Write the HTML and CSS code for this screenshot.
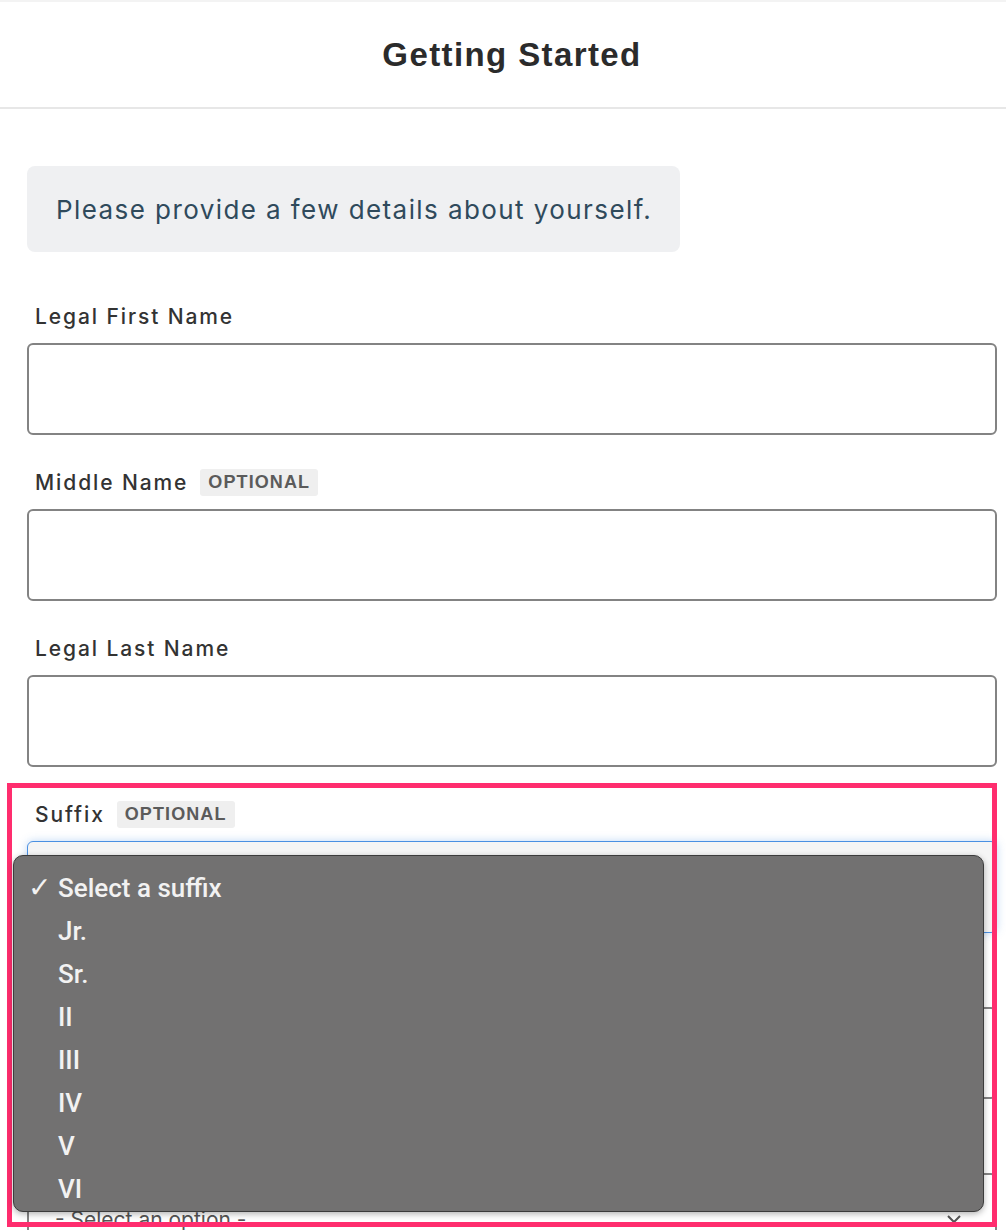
FILE: index.html
```html
<!DOCTYPE html>
<html lang="en">
<head>
<meta charset="utf-8">
<title>Getting Started</title>
<link rel="stylesheet" href="styles.css">
</head>
<body>
<header class="topbar"><h1>Getting Started</h1></header>
<main class="form">
  <div class="notice">Please provide a few details about yourself.</div>

  <div class="field first">
    <div class="label">Legal First Name</div>
    <input class="input" type="text">
  </div>

  <div class="field">
    <div class="label">Middle Name <span class="badge">OPTIONAL</span></div>
    <input class="input" type="text">
  </div>

  <div class="field">
    <div class="label">Legal Last Name</div>
    <input class="input" type="text">
  </div>

  <div class="field suffix">
    <div class="label">Suffix <span class="badge">OPTIONAL</span></div>
    <div class="select focused">
      <span></span>
      <svg class="chev" width="14" height="9" viewBox="0 0 14 9"><path d="M1 1l6 6 6-6" fill="none" stroke="#555" stroke-width="2"/></svg>
    </div>
    <div class="highlight"></div>
    <ul class="menu">
      <li class="selected"><span class="check">✓</span>Select a suffix</li>
      <li><span class="check"></span>Jr.</li>
      <li><span class="check"></span>Sr.</li>
      <li><span class="check"></span>II</li>
      <li><span class="check"></span>III</li>
      <li><span class="check"></span>IV</li>
      <li><span class="check"></span>V</li>
      <li><span class="check"></span>VI</li>
    </ul>
  </div>

  <div class="field">
    <div class="label"></div>
    <input class="input" type="text">
  </div>

  <div class="field">
    <div class="label"></div>
    <div class="select">
      <span>- Select an option -</span>
      <svg class="chev" width="14" height="9" viewBox="0 0 14 9"><path d="M1 1l6 6 6-6" fill="none" stroke="#555" stroke-width="2"/></svg>
    </div>
  </div>
</main>
</body>
</html>
```

FILE: styles.css
```css
html, body {
  margin: 0;
  height: 1230px;
  overflow: hidden;
  background: #fff;
}
body {
  font-family: Inter, "Liberation Sans", sans-serif;
  color: #333;
}
.topbar {
  height: 105px;
  padding-left: 18px;
  border-top: 2px solid #f3f3f3;
  border-bottom: 2px solid #e7e7e7;
  display: flex;
  align-items: center;
  justify-content: center;
}
.topbar h1 {
  margin: 0;
  font: 700 33px/1 "Liberation Sans", sans-serif;
  color: #2b2b2b;
  letter-spacing: 1.4px;
}
.form {
  padding: 57px 9px 0 27px;
}
.notice {
  width: 653px;
  height: 86px;
  box-sizing: border-box;
  padding-left: 29px;
  display: flex;
  align-items: center;
  background: #eff0f2;
  border-radius: 8px;
  font-size: 26px;
  color: #2f4a5c;
  letter-spacing: 1.42px;
}
.field {
  margin-top: 32px;
  position: relative;
}
.field.first {
  margin-top: 49px;
}
.label {
  height: 30px;
  display: flex;
  align-items: center;
  gap: 12px;
  padding-left: 8px;
  margin-bottom: 12px;
  font-weight: 500;
  font-size: 21px;
  color: #333;
  letter-spacing: 1.9px;
}
.badge {
  height: 27px;
  padding: 0 8px;
  display: flex;
  align-items: center;
  background: #efefef;
  border-radius: 3px;
  font: 700 18px "Liberation Sans", sans-serif;
  letter-spacing: 1.1px;
  color: #5b5b5b;
}
.input {
  display: block;
  width: 100%;
  height: 92px;
  box-sizing: border-box;
  border: 2px solid #838383;
  border-radius: 6px;
  background: #fff;
  margin: 0;
}
.select {
  height: 92px;
  box-sizing: border-box;
  border: 2px solid #838383;
  border-radius: 6px;
  display: flex;
  align-items: center;
  justify-content: space-between;
  padding: 0 34px 0 26px;
  font-size: 21px;
  color: #555;
  background: #fff;
}
.select.focused {
  border: 1px solid #4a90e2;
  background: #f5f5f5;
  box-shadow: 0 0 8px rgba(74, 144, 226, 0.35);
}
.highlight {
  position: absolute;
  top: -16px;
  left: -20px;
  right: 0;
  height: 444px;
  border: 5px solid #ff2d6e;
  box-sizing: border-box;
  z-index: 2;
  pointer-events: none;
}
.menu {
  position: absolute;
  top: 56px;
  left: -14px;
  width: 971px;
  box-sizing: border-box;
  margin: 0;
  padding: 10px 0 1px;
  list-style: none;
  background: #727171;
  border: 1px solid #3c3c3c;
  border-radius: 10px;
  box-shadow: 0 2px 6px rgba(0, 0, 0, 0.3);
  z-index: 3;
}
.menu li {
  height: 43px;
  display: flex;
  align-items: center;
  padding-left: 14px;
  font: 500 26px Roboto, "Liberation Sans", sans-serif;
  color: #f2f2f2;
}
.check {
  width: 30px;
  flex: none;
  font-family: "DejaVu Sans", sans-serif;
  font-size: 28px;
  font-weight: 700;
}
```
